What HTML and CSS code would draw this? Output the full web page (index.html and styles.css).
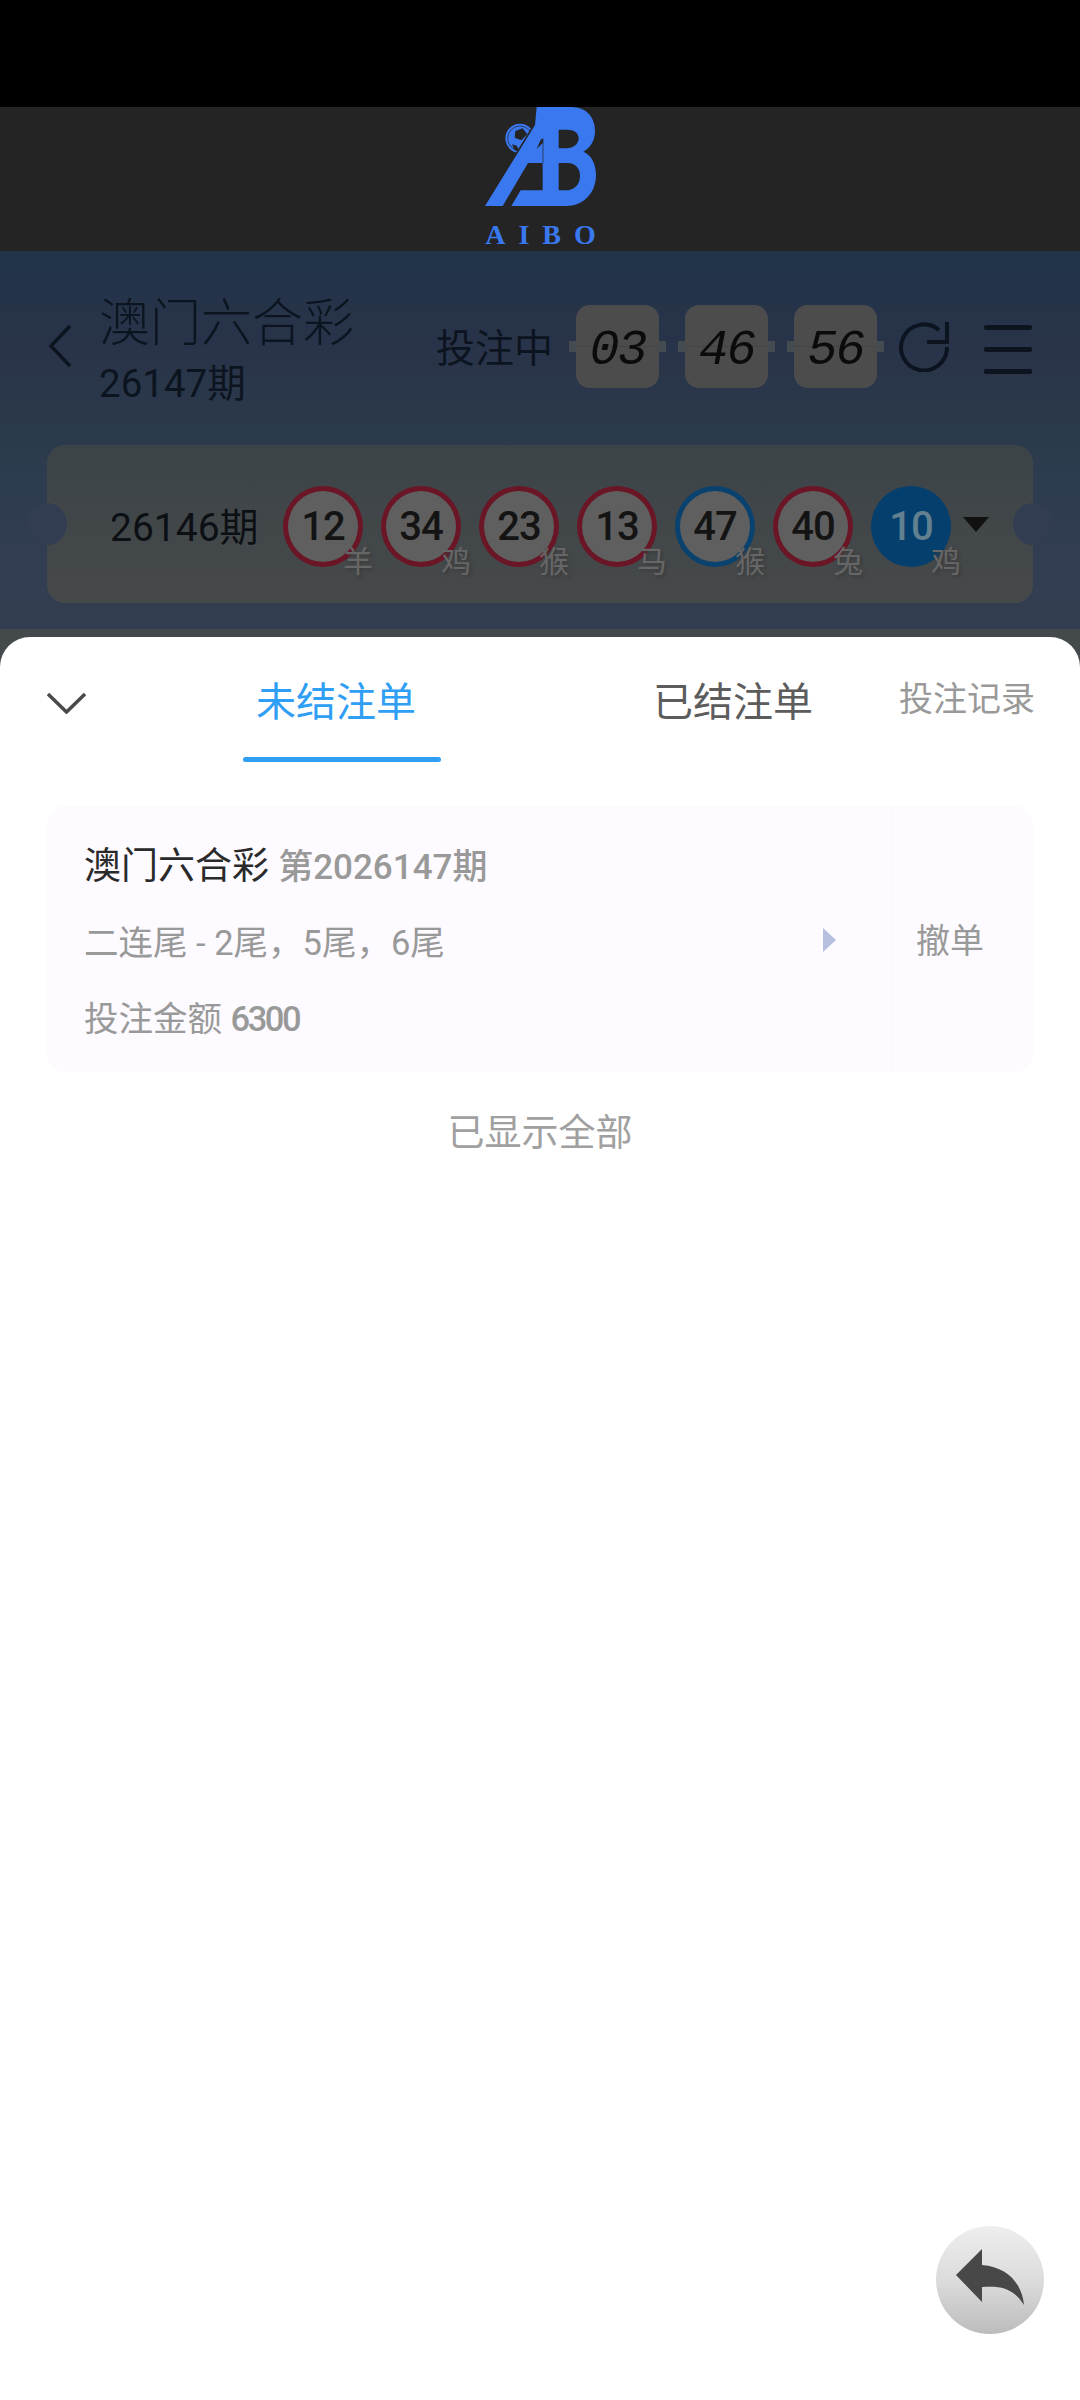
FILE: index.html
```html
<!DOCTYPE html>
<html lang="zh-CN">
<head>
    <meta charset="UTF-8">
    <title>未结注单</title>
    <link rel="stylesheet" href="styles.css">
</head>
<body>
    <div class="status-bar"></div>

    <div class="logo-bar">
        <svg class="logo-mark" width="114" height="101" viewBox="0 0 342 303">
            <!-- ball -->
            <circle cx="108" cy="94" r="44" fill="#3a78f0"/>
            <circle cx="108" cy="94" r="37" fill="none" stroke="#232423" stroke-width="2"/>
            <path d="M94 72 L116 64 L130 82 L112 100 L92 92 Z" fill="#232423"/>
            <path d="M84 112 L98 116 L106 132 L92 130 Z" fill="#232423"/>
            <path d="M3 297 L160 42" fill="none" stroke="#232423" stroke-width="9"/>
            <!-- AB -->
            <path d="M3 297 L153 54 L158 0 H262 C310 0 333 34 333 72 C333 100 320 122 298 134 C322 144 336 170 336 204 C336 258 298 297 246 297 H82 L110 250 H244 C272 250 288 232 288 206 C288 182 272 168 250 168 H224 V250 H176 V168 H132 L56 297 Z M224 68 V124 H246 C270 124 284 110 284 94 C284 78 270 68 250 68 Z" fill="#3a78f0" fill-rule="evenodd"/>
            <path d="M176 168 V108 L158 126 L170 98 L178 94 V168 Z" fill="#232423"/>
        </svg>
        <div class="logo-name">AIBO</div>
    </div>

    <div class="game-panel">
        <div class="game-head">
            <svg class="back-icon" width="24" height="44" viewBox="0 0 24 44">
                <path d="M22 2 L3 22 L22 42" fill="none" stroke="#0c1420" stroke-width="3.5"/>
            </svg>
            <div class="game-title">
                <div class="game-name">澳门六合彩</div>
                <div class="game-issue">26147期</div>
            </div>
            <div class="countdown-label">投注中</div>
            <div class="flip-card"><div class="flip-face">03</div></div>
            <div class="flip-card"><div class="flip-face">46</div></div>
            <div class="flip-card"><div class="flip-face">56</div></div>
            <svg class="refresh-icon" width="52" height="52" viewBox="0 0 52 52">
                <path d="M41 10 A23 23 0 1 0 49 27" fill="none" stroke="#0c1420" stroke-width="4"/>
                <path d="M49 2 V22 H29" fill="none" stroke="#0c1420" stroke-width="4"/>
            </svg>
            <div class="menu-icon"><span></span><span></span><span></span></div>
        </div>

        <div class="ticket">
            <div class="ticket-issue">26146期</div>
            <div class="balls">
                <div class="ball red">12<span class="zodiac">羊</span></div>
                <div class="ball red">34<span class="zodiac">鸡</span></div>
                <div class="ball red">23<span class="zodiac">猴</span></div>
                <div class="ball red">13<span class="zodiac">马</span></div>
                <div class="ball blue">47<span class="zodiac">猴</span></div>
                <div class="ball red">40<span class="zodiac">兔</span></div>
                <div class="ball special">10<span class="zodiac">鸡</span></div>
            </div>
            <div class="ticket-arrow"></div>
        </div>
    </div>

    <div class="sheet">
        <div class="tabs">
            <svg class="close-icon" width="39" height="22" viewBox="0 0 39 22">
                <path d="M1 2 L19.5 20 L38 2" fill="none" stroke="#4a4a4a" stroke-width="3.5"/>
            </svg>
            <div class="tab active">未结注单</div>
            <div class="tab">已结注单</div>
            <div class="tab-record">投注记录</div>
        </div>

        <div class="order-card">
            <div class="order-info">
                <div class="order-title">澳门六合彩 <span class="order-issue">第2026147期</span></div>
                <div class="order-row">
                    <span>二连尾 - 2尾，5尾，6尾</span>
                    <i class="order-arrow"></i>
                </div>
                <div class="order-amount">投注金额 <span class="num">6300</span></div>
            </div>
            <div class="order-cancel">撤单</div>
        </div>

        <div class="list-end">已显示全部</div>
    </div>

    <button class="float-back">
        <svg width="108" height="108" viewBox="0 0 108 108">
            <path d="M20 49 L46 23 V39 C72 41 86 58 88 79 C76 60 62 60 46 61 V76 Z" fill="#484848"/>
        </svg>
    </button>
</body>
</html>
```

FILE: styles.css
```css
* {
    box-sizing: border-box;
}

html, body {
    height: 100%;
}

body {
    position: relative;
    display: flex;
    flex-direction: column;
    margin: 0;
    background: #444a4c;
    font-family: Roboto, "Noto Sans CJK SC", sans-serif;
}

.status-bar {
    height: 107px;
    background: #000;
}

.logo-bar {
    height: 144px;
    display: flex;
    flex-direction: column;
    align-items: center;
    background: #232423;
}

.logo-mark {
    display: block;
    margin-left: 2px;
}

.logo-name {
    margin-top: 11px;
    padding-left: 14px;
    font-family: "Liberation Serif", serif;
    font-size: 28px;
    font-weight: 700;
    line-height: 32px;
    letter-spacing: 13px;
    color: #3a78f0;
}

.game-panel {
    height: 386px;
    padding: 40px 47px 0;
    background: linear-gradient(180deg, #21344a 0%, #293349 26%, #2b3a4b 46%, #2d3c4e 60%, #323d53 78%, #323e4f 98%, #444a4c 98%);
}

.game-head {
    height: 110px;
    display: flex;
    align-items: center;
    color: #0c1420;
}

.back-icon {
    flex: none;
    margin: 0 27px 0 1px;
}

.game-title {
    width: 337px;
    margin-top: 7px;
}

.game-name {
    font-size: 51px;
    line-height: 62px;
    font-weight: 300;
}

.game-issue {
    margin-top: 7px;
    font-size: 38.5px;
    line-height: 44px;
}

.countdown-label {
    width: 140px;
    margin-top: 6px;
    font-size: 39px;
    line-height: 44px;
}

.flip-card {
    position: relative;
    flex: none;
    width: 83px;
    height: 83px;
    margin-right: 26px;
}

.flip-card::before {
    content: "";
    position: absolute;
    left: -7px;
    right: -7px;
    top: 36px;
    height: 11px;
    background: #454c51;
}

.flip-face {
    position: relative;
    height: 83px;
    border-radius: 14px;
    background: linear-gradient(180deg, #4c4c4c 49%, #444 49%, #444 51%, #4c4c4c 51%);
    font-family: "Liberation Mono", monospace;
    font-size: 50px;
    font-style: italic;
    letter-spacing: -2px;
    line-height: 92px;
    text-align: center;
    color: #0b0b0b;
}

.refresh-icon {
    flex: none;
    margin: 0 34px 0 -5px;
}

.menu-icon {
    width: 48px;
    margin-top: 6px;
    display: flex;
    flex-direction: column;
    gap: 17px;
}

.menu-icon span {
    height: 5px;
    border-radius: 2px;
    background: #0c1420;
}

.ticket {
    position: relative;
    height: 158px;
    margin-top: 44px;
    display: flex;
    align-items: center;
    padding-left: 63px;
    border-radius: 18px;
    background: linear-gradient(180deg, #3c4448, #46494a);
}

.ticket::before,
.ticket::after {
    content: "";
    position: absolute;
    top: 58px;
    width: 40px;
    height: 42px;
    border-radius: 50%;
    background: #333d51;
}

.ticket::before {
    left: -20px;
}

.ticket::after {
    right: -20px;
}

.ticket-issue {
    flex: none;
    width: 173px;
    font-size: 39px;
    color: #0c1014;
}

.balls {
    display: flex;
    gap: 18px;
    margin-top: 5px;
}

.ball {
    position: relative;
    width: 80px;
    height: 81px;
    border-radius: 50%;
    border: 5px solid;
    background: #5f5f5f;
    font-size: 40px;
    font-weight: 500;
    line-height: 71px;
    letter-spacing: -1px;
    text-align: center;
    color: #141414;
}

.ball.red {
    border-color: #6a1626;
}

.ball.blue {
    border-color: #0a426f;
}

.ball.special {
    border-color: #043f6e;
    background: #043f6e;
    color: #62808f;
}

.zodiac {
    position: absolute;
    left: 55px;
    top: 53px;
    font-size: 30px;
    font-weight: 400;
    line-height: 36px;
    letter-spacing: 0;
    color: #666;
    text-shadow: 2px 2px 3px #3c3c3c;
}

.ticket-arrow {
    width: 0;
    height: 0;
    margin: 0 0 0 12px;
    border-left: 13px solid transparent;
    border-right: 13px solid transparent;
    border-top: 15px solid #111;
}

.sheet {
    flex: 1;
    position: relative;
    padding: 0 47px;
    border-radius: 30px 30px 0 0;
    background: #fff;
}

.tabs {
    position: relative;
    height: 125px;
    display: flex;
    align-items: flex-start;
}

.close-icon {
    flex: none;
    margin: 55px 157px 0 0;
}

.tab {
    position: relative;
    flex: none;
    width: 198px;
    height: 123px;
    padding: 38px 0 0 13px;
    margin-right: 199px;
    font-size: 40px;
    line-height: 56px;
    color: #5c5c5c;
}

.tab.active {
    color: #2f9ef5;
}

.tab.active::after {
    content: "";
    position: absolute;
    left: 0;
    right: 0;
    bottom: -2px;
    height: 5px;
    border-radius: 3px;
    background: #2f9ef5;
}

.tab-record {
    position: absolute;
    right: -2px;
    top: 37px;
    font-size: 34px;
    line-height: 50px;
    color: #999;
}

.order-card {
    display: flex;
    height: 266px;
    margin-top: 44px;
    border-radius: 18px;
    background: #fdfbff;
}

.order-info {
    flex: 1;
    padding: 36px 56px 0 37px;
    border-right: 1px solid #f8f6fa;
}

.order-title {
    font-size: 37px;
    line-height: 50px;
    color: #2a2a2a;
}

.order-issue {
    font-size: 35px;
    font-weight: 500;
    color: #999;
}

.num {
    letter-spacing: -2.5px;
    font-weight: 500;
}

.order-row {
    display: flex;
    align-items: center;
    justify-content: space-between;
    height: 50px;
    margin-top: 22px;
    font-size: 34.5px;
    color: #999;
}

.order-arrow {
    width: 0;
    height: 0;
    border-top: 12px solid transparent;
    border-bottom: 12px solid transparent;
    border-left: 13px solid #b7c0de;
}

.order-amount {
    margin-top: 29px;
    font-size: 34.5px;
    line-height: 50px;
    color: #999;
}

.order-cancel {
    width: 140px;
    padding: 110px 26px 0 0;
    font-size: 34px;
    line-height: 50px;
    text-align: center;
    color: #999;
}

.list-end {
    margin-top: 36px;
    font-size: 37px;
    line-height: 52px;
    text-align: center;
    color: #a0a0a0;
}

.float-back {
    position: absolute;
    left: 936px;
    top: 2226px;
    width: 108px;
    height: 108px;
    padding: 0;
    border: none;
    border-radius: 50%;
    background: linear-gradient(180deg, #eeeeee, #dcdcdc 50%, #bcbcbc);
}

.float-back svg {
    display: block;
}
```
